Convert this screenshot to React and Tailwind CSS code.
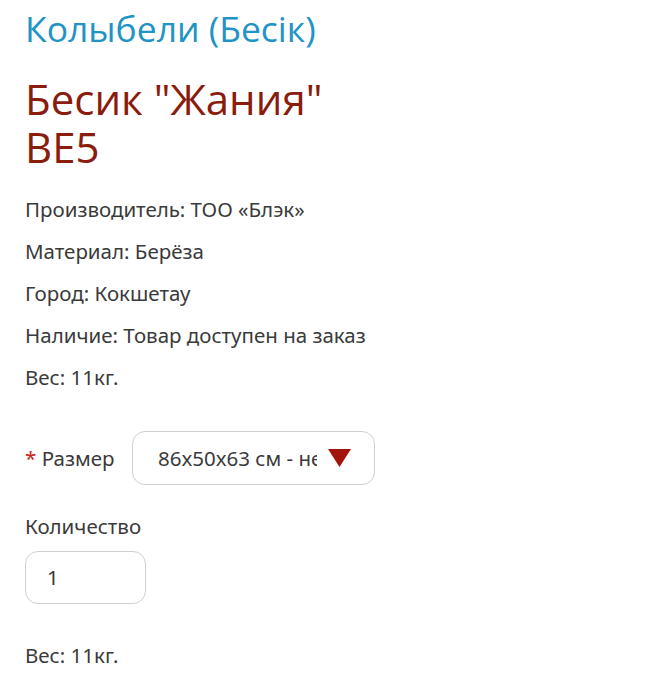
export default function App() {
  const body = { fontFamily: '"Noto Sans", "Open Sans", sans-serif' };
  const head = { fontFamily: '"Open Sans", sans-serif' };
  return (
    <div className="bg-white w-[667px] h-[700px] overflow-hidden pl-[25px] text-[#3a3a3a]" style={body}>
      <div className="pt-[4px] text-[35.5px] leading-[48px] text-[#2193c4]" style={head}>
        Колыбели (Бесік)
      </div>
      <h1 className="mt-[23px] text-[42px] leading-[48px] text-[#8a1c0e]" style={head}>
        Бесик "Жания"<br />BE5
      </h1>
      <div className="mt-[17px] text-[20.5px] leading-[42px]">
        <div>Производитель: ТОО «Блэк»</div>
        <div>Материал: Берёза</div>
        <div>Город: Кокшетау</div>
        <div>Наличие: Товар доступен на заказ</div>
        <div>Вес: 11кг.</div>
      </div>
      <div className="mt-[33px] flex items-center">
        <div className="w-[107px] text-[20.5px] whitespace-nowrap">
          <span className="text-[#d0261b]">*</span> Размер
        </div>
        <div className="w-[243px] h-[54px] border border-[#d0d0d0] rounded-[13px] flex items-center pl-[25px]">
          <div className="w-[159px] overflow-hidden whitespace-nowrap text-[20.5px]">86x50x63 см - не выбрано</div>
          <svg width="23" height="18" viewBox="0 0 23 18" className="ml-[11px]">
            <polygon points="0,0 23,0 11.5,18" fill="#a3140a" />
          </svg>
        </div>
      </div>
      <div className="mt-[27px] text-[20.5px] leading-[28px]">Количество</div>
      <div className="mt-[11px] w-[121px] h-[53px] border border-[#d0d0d0] rounded-[13px] flex items-center pl-[21px] text-[20.5px]">1</div>
      <div className="mt-[37px] text-[20.5px] leading-[28px]">Вес: 11кг.</div>
    </div>
  );
}
